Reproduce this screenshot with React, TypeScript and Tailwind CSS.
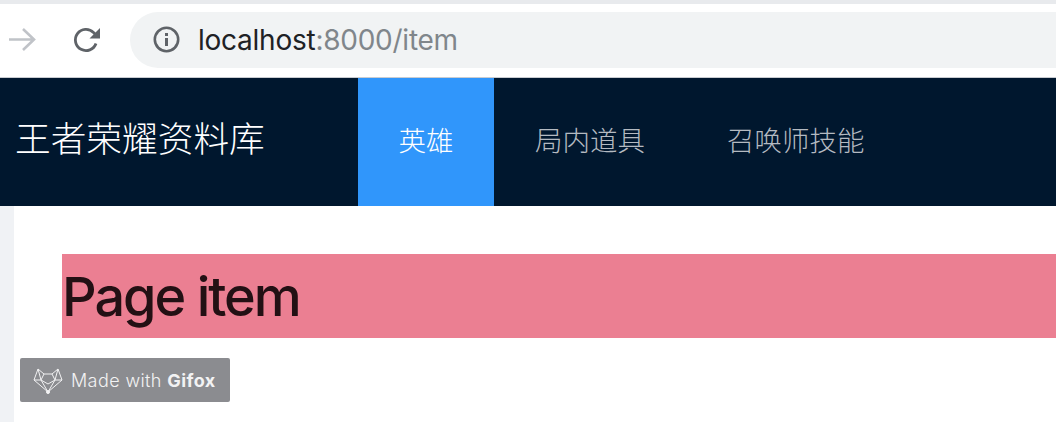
const cjk = "font-['Noto_Sans_CJK_SC','Liberation_Sans',sans-serif]";

function NavItem({ label, active }: { label: string; active?: boolean }) {
  return (
    <div
      className={`flex h-full items-center justify-center pb-[5px] text-[27.5px] font-light ${
        active ? "w-[136px] bg-[#3096fb] text-white" : "px-[41px] text-[#b4bac1]"
      }`}
    >
      {label}
    </div>
  );
}

function FoxLogo() {
  return (
    <svg width="30" height="27" viewBox="0 0 30 27" fill="none" stroke="#f2f2f3" strokeWidth="1" strokeLinejoin="round">
      <path d="M1 13L5 2L11 7H19L25 2L29 13L15 25Z" />
      <path d="M5 2L8 13L1 13M25 2L22 13L29 13M11 7L8 13L15 25L22 13L19 7M8 13L15 17L22 13" />
      <circle cx="15" cy="25" r="1.5" fill="#f2f2f3" />
    </svg>
  );
}

export default function App() {
  return (
    <div className="relative h-[422px] w-[1056px] overflow-hidden bg-white font-['Inter','Liberation_Sans',sans-serif]">
      <div className="h-[4px] bg-[#e8eaed]" />

      {/* browser toolbar */}
      <div className="flex h-[74px] items-center border-b border-[#c9ccd1] bg-white pb-[2px]">
        <svg className="ml-[9px]" width="27" height="27" viewBox="0 0 27 27" fill="none" stroke="#c0c3c8" strokeWidth="2.6">
          <path d="M0 13.5H25M14 3L25 13.5L14 24" />
        </svg>
        <svg className="ml-[37px]" width="28" height="28" viewBox="0 0 28 28" fill="none">
          <path d="M23 17.5A10.6 10.6 0 1 1 20.5 6.5L24 10" stroke="#5f6368" strokeWidth="2.8" />
          <path d="M27 2V12.5H16.5Z" fill="#5f6368" />
        </svg>
        <div className="ml-[29px] flex h-[56px] flex-1 items-center rounded-l-[28px] bg-[#f1f3f4] pl-[23px]">
          <svg width="27" height="27" viewBox="0 0 27 27" fill="none">
            <circle cx="13.5" cy="13.5" r="11.7" stroke="#5f6368" strokeWidth="2.6" />
            <rect x="12" y="12" width="3" height="8" fill="#5f6368" />
            <rect x="12" y="7" width="3" height="3" fill="#5f6368" />
          </svg>
          <span className="ml-[18px] text-[28px] tracking-[-0.25px] text-[#202124]">
            localhost<span className="text-[#80868b]">:8000/item</span>
          </span>
        </div>
      </div>

      {/* app header */}
      <header className={`flex h-[128px] items-center bg-[#00172e] ${cjk}`}>
        <div className="flex h-full w-[358px] items-center pb-[10px] pl-[15px] text-[35.7px] font-light text-white">王者荣耀资料库</div>
        <NavItem label="英雄" active />
        <NavItem label="局内道具" />
        <NavItem label="召唤师技能" />
      </header>

      {/* content */}
      <div className="flex h-[216px]">
        <div className="w-[14px] bg-[#f0f2f5]" />
        <main className="flex-1 pl-[48px] pt-[48px]">
          <div className="flex h-[84px] items-center bg-[#eb7f92] text-[54px] font-medium tracking-[-2px] text-[#231014]">Page item</div>
        </main>
      </div>

      {/* gifox watermark */}
      <div className="absolute left-[20px] top-[358px] flex h-[44px] w-[210px] items-center rounded-[2px] bg-[#8b8c90] pl-[13px] text-[18px] font-light tracking-[0.4px] text-[#f2f2f3]">
        <FoxLogo />
        <span className="ml-[8px]">
          Made with <span className="font-bold">Gifox</span>
        </span>
      </div>
    </div>
  );
}
